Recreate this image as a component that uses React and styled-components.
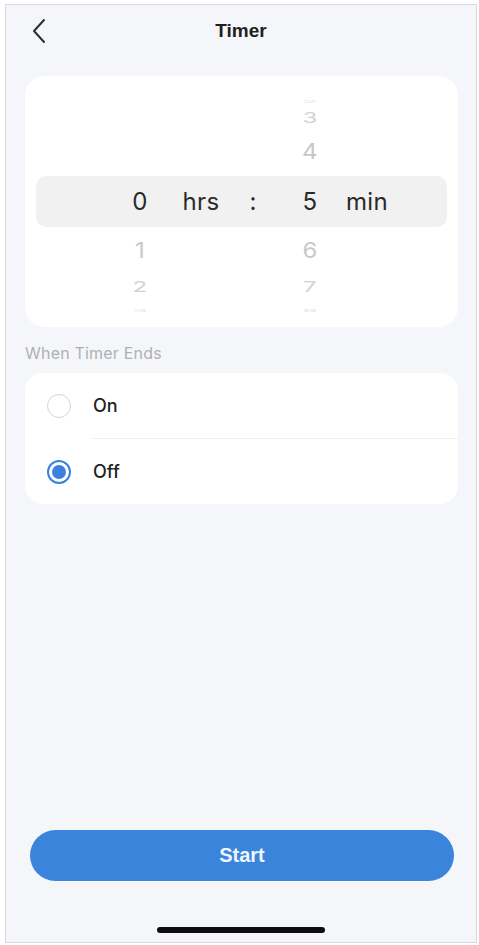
import React from 'react'
import styled, { createGlobalStyle } from 'styled-components'

const GlobalStyle = createGlobalStyle`
  html, body {
    margin: 0;
    padding: 0;
    background: #ffffff;
  }
  body {
    font-family: Inter, "Liberation Sans", Arial, sans-serif;
    -webkit-font-smoothing: antialiased;
  }
`

const Phone = styled.div`
  box-sizing: border-box;
  margin: 4px 0 0 5px;
  width: 472px;
  height: 939px;
  border: 1.5px solid #d9d9dc;
  background: #f5f6fa;
  display: flex;
  flex-direction: column;
`

const Header = styled.div`
  height: 52px;
  display: grid;
  grid-template-columns: 1fr auto 1fr;
  align-items: center;
  padding: 0 25px;
`

const Back = styled.button`
  justify-self: start;
  border: 0;
  background: none;
  padding: 0;
  display: flex;
  cursor: pointer;
`

const Title = styled.h1`
  margin: 0;
  font-family: "Liberation Sans", Arial, sans-serif;
  font-size: 19px;
  font-weight: 700;
  color: #1f1f1f;
`

const Card = styled.div`
  background: #ffffff;
  border-radius: ${p => p.radius}px;
  margin: ${p => p.top}px 18px 0 19px;
`

const Picker = styled(Card)`
  padding: 14px 0 20px;
  display: flex;
  flex-direction: column;
`

const WheelRow = styled.div`
  display: grid;
  grid-template-columns: 86px 36px 86px 18px 18px 60px 1fr;
  height: ${p => p.h}px;
  margin: 0 11px;
  align-items: center;
  font-size: 24px;
  letter-spacing: 0.3px;
  color: ${p => p.tone};
`

const Band = styled(WheelRow)`
  background: #f1f1f2;
  border-radius: 10px;
  color: #2a2a2a;
`

const Cell = styled.span`
  grid-column: ${p => p.col};
  text-align: center;
  line-height: 1;
  transform: scaleY(${p => p.squash || 1});
`

const UnitCell = styled(Cell)`
  text-align: left;
  padding-left: 6px;
`

const SectionLabel = styled.div`
  margin: 16px 0 0 19px;
  line-height: 20px;
  font-size: 16px;
  letter-spacing: 0.2px;
  color: #b0b0b4;
`

const Options = styled(Card)`
  display: flex;
  flex-direction: column;
`

const Option = styled.label`
  height: 65px;
  display: flex;
  align-items: center;
  gap: 22px;
  padding-left: 22px;
  font-size: 18px;
  font-weight: 500;
  color: #222222;
  cursor: pointer;
`

const Divider = styled.div`
  height: 1px;
  background: #f0f0f2;
  margin-left: 67px;
`

const Radio = styled.span`
  box-sizing: border-box;
  width: 24px;
  height: 24px;
  border-radius: 50%;
  border: ${p => (p.checked ? '2px solid #3b80dc' : '1.5px solid #d4d4d6')};
  display: flex;
  align-items: center;
  justify-content: center;

  &::after {
    content: '';
    width: 14px;
    height: 14px;
    border-radius: 50%;
    background: ${p => (p.checked ? '#3b80dc' : 'transparent')};
  }
`

const Footer = styled.div`
  margin-top: auto;
  display: flex;
  flex-direction: column;
  align-items: center;
  padding-bottom: 9px;
`

const StartButton = styled.button`
  align-self: stretch;
  margin: 0 22px 0 24px;
  height: 51px;
  border: 0;
  border-radius: 26px;
  background: #3a84dc;
  color: #eef5fd;
  font-family: "Liberation Sans", Arial, sans-serif;
  font-size: 20px;
  font-weight: 700;
  cursor: pointer;
`

const HomeBar = styled.div`
  margin-top: 46px;
  width: 168px;
  height: 6px;
  border-radius: 3px;
  background: #0d0d0d;
`

const above = [
  { h: 16, v: '2', tone: '#e2e2e2', squash: 0.15 },
  { h: 22, v: '3', tone: '#d2d2d4', squash: 0.6 },
  { h: 48, v: '4', tone: '#c6c6c8', squash: 0.88 }
]

const below = [
  { h: 48, hour: '1', min: '6', tone: '#c8c8ca', squash: 0.88 },
  { h: 24, hour: '2', min: '7', tone: '#d2d2d4', squash: 0.62 },
  { h: 8, hour: '3', min: '8', tone: '#e2e2e2', squash: 0.15 }
]

const Chevron = () => (
  <svg width='16' height='26' viewBox='0 0 16 26' fill='none'>
    <path d='M13 2 L3 13 L13 24' stroke='#2e2e2e' strokeWidth='2' strokeLinecap='round' strokeLinejoin='round' />
  </svg>
)

const App = () => (
  <>
    <GlobalStyle />
    <Phone>
      <Header>
        <Back aria-label='Back'><Chevron /></Back>
        <Title>Timer</Title>
      </Header>

      <Picker radius={20} top={19}>
        {above.map(r => (
          <WheelRow key={r.v} h={r.h} tone={r.tone}>
            <Cell col={6} squash={r.squash}>{r.v}</Cell>
          </WheelRow>
        ))}
        <Band h={51}>
          <Cell col={2}>0</Cell>
          <Cell col={3}>hrs</Cell>
          <Cell col={4}>:</Cell>
          <Cell col={6}>5</Cell>
          <UnitCell col={7}>min</UnitCell>
        </Band>
        {below.map(r => (
          <WheelRow key={r.min} h={r.h} tone={r.tone}>
            <Cell col={2} squash={r.squash}>{r.hour}</Cell>
            <Cell col={6} squash={r.squash}>{r.min}</Cell>
          </WheelRow>
        ))}
      </Picker>

      <SectionLabel>When Timer Ends</SectionLabel>

      <Options radius={18} top={10}>
        <Option>
          <Radio />
          On
        </Option>
        <Divider />
        <Option>
          <Radio checked />
          Off
        </Option>
      </Options>

      <Footer>
        <StartButton>Start</StartButton>
        <HomeBar />
      </Footer>
    </Phone>
  </>
)

export default App
